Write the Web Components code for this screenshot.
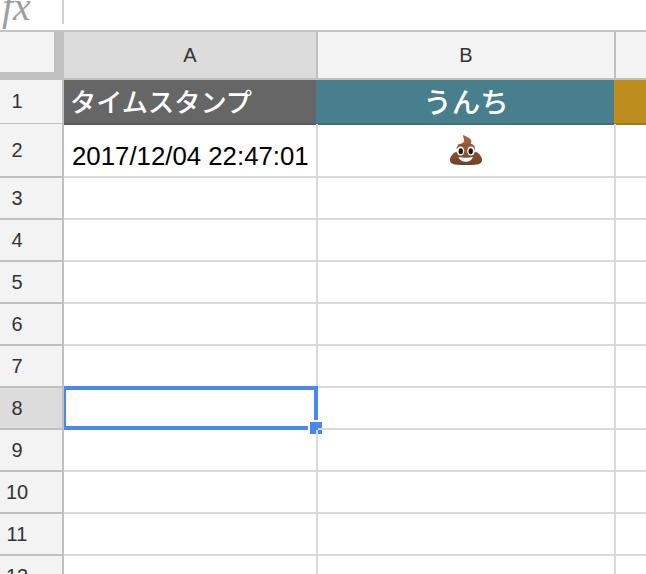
<!DOCTYPE html>
<html>
<head>
<meta charset="utf-8">
<style>
html, body { margin: 0; height: 100%; overflow: hidden; background: #fff; }
body { font-family: "Liberation Sans", "Noto Sans CJK JP", sans-serif; }
</style>
</head>
<body>
<sheet-app>
    <formula-bar></formula-bar>
    <sheet-row kind="head" num="">
        <sheet-cell kind="colhead" active>A</sheet-cell>
        <sheet-cell kind="colhead">B</sheet-cell>
        <sheet-cell kind="colhead" last></sheet-cell>
    </sheet-row>
    <sheet-row num="1" height="44">
        <sheet-cell kind="title" size="26.2" fill="#666666" edge="#595959">タイムスタンプ</sheet-cell>
        <sheet-cell kind="title" size="28.5" fill="#47808c" edge="#3e6f79" center shift>うんち</sheet-cell>
        <sheet-cell kind="title" fill="#bd8e1e" edge="#a47b1a" shift></sheet-cell>
    </sheet-row>
    <sheet-row num="2" height="54">
        <sheet-cell kind="data">2017/12/04 22:47:01</sheet-cell>
        <sheet-cell kind="data" center><poop-icon></poop-icon></sheet-cell>
        <sheet-cell kind="data" last></sheet-cell>
    </sheet-row>
    <sheet-row num="3"></sheet-row>
    <sheet-row num="4"></sheet-row>
    <sheet-row num="5"></sheet-row>
    <sheet-row num="6"></sheet-row>
    <sheet-row num="7"></sheet-row>
    <sheet-row num="8" active>
        <sheet-cell kind="data" selected></sheet-cell>
        <sheet-cell kind="data"></sheet-cell>
        <sheet-cell kind="data" last></sheet-cell>
    </sheet-row>
    <sheet-row num="9"></sheet-row>
    <sheet-row num="10"></sheet-row>
    <sheet-row num="11"></sheet-row>
    <sheet-row num="12"></sheet-row>
</sheet-app>

<script>
class SheetApp extends HTMLElement {
    constructor() {
        super();
        const shadow = this.attachShadow({mode: 'open'});
        shadow.innerHTML = `
            <style>
            :host { display: block; width: 646px; height: 574px; overflow: hidden; background: #fff; }
            </style>
            <slot></slot>
        `;
    }
}
customElements.define('sheet-app', SheetApp);

class FormulaBar extends HTMLElement {
    constructor() {
        super();
        const shadow = this.attachShadow({mode: 'open'});
        shadow.innerHTML = `
            <style>
            :host { display: flex; height: 30px; border-bottom: 2px solid #c4c4c4; background: #fff; overflow: hidden; }
            .fx { width: 64px; height: 24px; box-sizing: border-box; padding-left: 2px; border-right: 2px solid #d0d0d0;
                  font: italic 40px/13px "Liberation Serif", serif; color: #9f9f9f; }
            </style>
            <div class="fx">fx</div>
        `;
    }
}
customElements.define('formula-bar', FormulaBar);

class SheetRow extends HTMLElement {
    constructor() {
        super();
        const shadow = this.attachShadow({mode: 'open'});
        const num = this.getAttribute('num');
        const head = this.getAttribute('kind') === 'head';
        const h = this.getAttribute('height') || (head ? 48 : 42);
        shadow.innerHTML = `
            <style>
            :host { display: grid; grid-template-columns: 64px 254px 298px 1fr; height: ${h}px; }
            .num { box-sizing: border-box; display: flex; align-items: center; justify-content: center;
                   padding-right: 28px; background: #f3f3f3; color: #333;
                   font-size: 20px; border-right: 2px solid #c0c0c0; border-bottom: 2px solid #c0c0c0; }
            :host([active]) .num { background: #dcdcdc; }
            .corner { box-sizing: border-box; background: #c0c0c0; padding: 0 8px 8px 0; border-right: 2px solid #c0c0c0; }
            .corner div { height: 100%; background: #f3f3f3; }
            </style>
            ${head ? '<div class="corner"><div></div></div>' : `<div class="num">${num}</div>`}
            <slot></slot>
        `;
        if (!this.children.length) {
            this.innerHTML = '<sheet-cell kind="data"></sheet-cell><sheet-cell kind="data"></sheet-cell><sheet-cell kind="data" last></sheet-cell>';
        }
    }
}
customElements.define('sheet-row', SheetRow);

class SheetCell extends HTMLElement {
    constructor() {
        super();
        const shadow = this.attachShadow({mode: 'open'});
        const fill = this.getAttribute('fill') || '#fff';
        const edge = this.getAttribute('edge') || '#595959';
        const size = this.getAttribute('size') || 25.8;
        shadow.innerHTML = `
            <style>
            :host { display: flex; box-sizing: border-box; align-items: center; position: relative; min-width: 0; white-space: nowrap; }
            :host([kind="colhead"]) { justify-content: center; background: #f3f3f3; color: #333; font-size: 20px;
                border-right: 2px solid #c0c0c0; border-bottom: 2px solid #c0c0c0; }
            :host([kind="colhead"][active]) { background: #dcdcdc; }
            :host([kind="title"]) { background: ${fill}; color: #fff; font-size: ${size}px; font-weight: 500; padding-left: 6px; padding-bottom: 4px;
                box-shadow: inset 0 -2px 0 ${edge}; }
            :host([kind="data"]) { color: #000; font-size: ${size}px; padding-left: 8px; padding-top: 12px;
                border-right: 2px solid #d9d9d9; border-bottom: 2px solid #d9d9d9; }
            :host([last]) { border-right: none !important; }
            :host([center]) { justify-content: center; padding-left: 0; padding-top: 0; }
            :host([shift]) { margin-left: -2px; }
            .sel { position: absolute; left: 0; top: -2px; right: -2px; bottom: -2px; box-sizing: border-box;
                   border: solid #4a87ee; border-width: 4px 4px 4px 2px; }
            .sel::after { content: ""; position: absolute; right: -8px; bottom: -8px; width: 14px; height: 14px; box-sizing: border-box;
                   background: #4a87ee; border-left: 2px solid #fff; border-top: 2px solid #fff; }
            </style>
            <slot></slot>
            ${this.hasAttribute('selected') ? '<div class="sel"></div>' : ''}
        `;
    }
}
customElements.define('sheet-cell', SheetCell);

class PoopIcon extends HTMLElement {
    constructor() {
        super();
        const shadow = this.attachShadow({mode: 'open'});
        shadow.innerHTML = `
            <style>:host { display: block; width: 34px; height: 32px; } svg { display: block; }</style>
            <svg width="34" height="32" viewBox="0 0 34 32">
                <defs>
                    <linearGradient id="b" x1="0" y1="0" x2="0" y2="1">
                        <stop offset="0" stop-color="#a5683f"/><stop offset="0.6" stop-color="#8d5231"/><stop offset="1" stop-color="#6f3f24"/>
                    </linearGradient>
                </defs>
                <path fill="url(#b)" d="M14 1c3 1 7 3 8 5 .8 1.800.2 3-.5 3.600 2.600.6 4.500 2.600 4.500 5 0 1-.3 1.900-.8 2.600C29 18 32 21 33 25c.5 3-1.500 5-5 5.500-7 .8-15 .8-22 0-3.500-.5-5.500-2.500-5-5.500 1-4 4-7 7.800-7.800C8 16.300 7.500 15 7.700 13.800 8 11.500 10 10 12.500 9.400 14.500 8.500 15.500 7.300 15 5.500 14.700 4 14 2.500 14 1z"/>
                <path fill="none" stroke="#6b3c20" stroke-width=".8" opacity=".6" d="M9 10.500c4 1.500 9 1 12.500-1M5 21c3 0 4-1 4.500-3M25.500 18c.5 2 2 3 4 3"/>
                <ellipse cx="11.500" cy="17" rx="3.800" ry="4.600" fill="#fff"/>
                <ellipse cx="22" cy="17" rx="3.800" ry="4.600" fill="#fff"/>
                <ellipse cx="11.800" cy="17.300" rx="2.200" ry="3" fill="#1e1410"/>
                <ellipse cx="21.700" cy="17.300" rx="2.200" ry="3" fill="#1e1410"/>
                <path fill="#fff" d="M9.500 23c4.500 1 10 1 14.500 0-1 3-3.700 4.700-7.200 4.700S10.500 26 9.500 23z"/>
            </svg>
        `;
    }
}
customElements.define('poop-icon', PoopIcon);
</script>
</body>
</html>
